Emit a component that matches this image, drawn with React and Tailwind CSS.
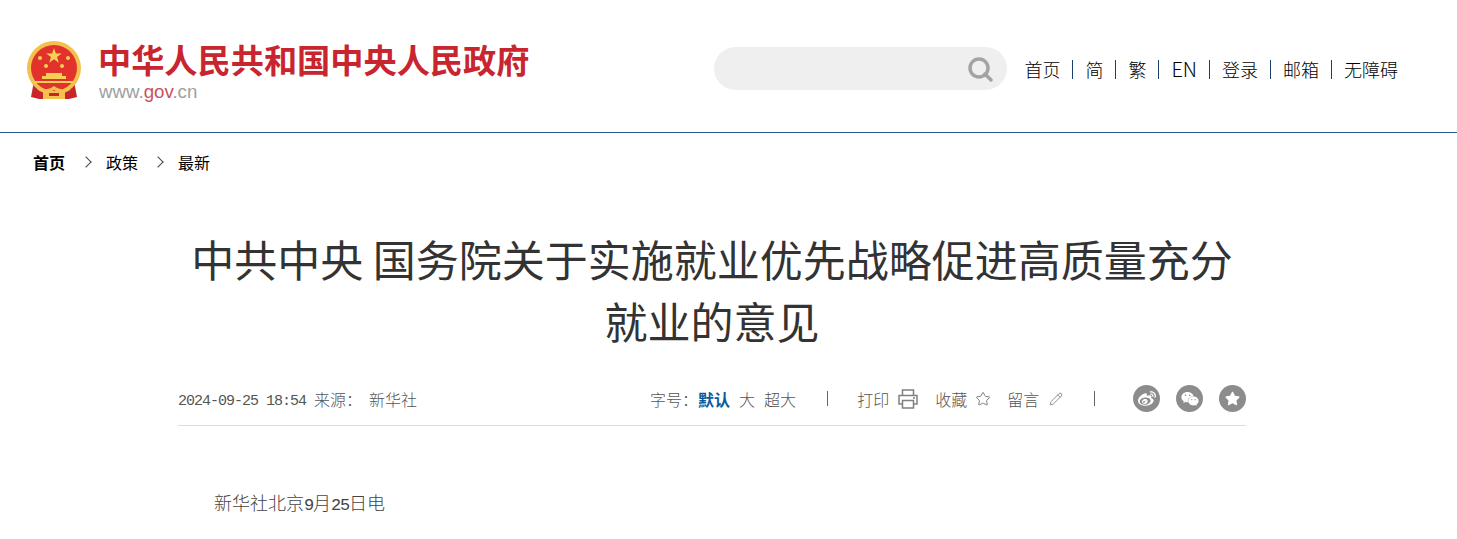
import { Pencil, Star } from "lucide-react";
import { FaWeibo, FaWeixin, FaStar } from "react-icons/fa";

const cjk = "font-['Noto_Sans_CJK_SC','Liberation_Sans',sans-serif]";

const navItems = ["首页", "简", "繁", "EN", "登录", "邮箱", "无障碍"];

function Emblem() {
  return (
    <svg width="58" height="60" viewBox="0 0 58 60" className="shrink-0">
      <path d="M9 40 L6 56 L14 58 L44 58 L52 56 L49 40 Z" fill="#c9232b" />
      <circle cx="29" cy="27" r="27" fill="#f2c14e" />
      <circle cx="29" cy="27" r="23" fill="#e1332c" />
      <path d="M29 7l1.9 5.6h5.9l-4.8 3.5 1.8 5.6-4.8-3.4-4.8 3.4 1.8-5.6-4.8-3.5h5.9z" fill="#f6cf57" />
      <circle cx="15" cy="17" r="2" fill="#f6cf57" />
      <circle cx="43" cy="17" r="2" fill="#f6cf57" />
      <circle cx="21" cy="25" r="2" fill="#f6cf57" />
      <circle cx="37" cy="25" r="2" fill="#f6cf57" />
      <path d="M17 38h24v-3h-4v-3H21v3h-4z" fill="#f6cf57" />
      <path d="M9 40h40v2H9z" fill="#f6cf57" />
      <path d="M11 44c5 5 11 6 18 1 7 5 13 4 18-1l-2 5c-5 3-11 3-16 0-5 3-11 3-16 0z" fill="#f2c14e" />
      <path d="M18 51h22v7H18z" fill="#f2c14e" />
      <path d="M24 52h10v3H24z" fill="#c9232b" />
    </svg>
  );
}

function SearchIcon() {
  return (
    <svg width="26" height="26" viewBox="0 0 26 26" fill="none" stroke="#a3a3a3">
      <circle cx="12" cy="12" r="9" strokeWidth="3.5" />
      <path d="M18 18l6 6" strokeWidth="3.5" strokeLinecap="round" />
    </svg>
  );
}

function PrintIcon() {
  return (
    <svg width="20" height="20" viewBox="0 0 20 20" fill="none" stroke="#808080" strokeWidth="1.5">
      <path d="M4.5 6V1h11v5" />
      <path d="M4.5 15H1V6.5h18V15h-3.5" />
      <path d="M4.5 11.5h11V19h-11z" />
      <path d="M15 9h2" />
    </svg>
  );
}

function Social({ children }) {
  return (
    <span className="flex h-[27px] w-[27px] items-center justify-center rounded-full bg-[#8c8c8c] text-white">
      {children}
    </span>
  );
}

export default function App() {
  return (
    <div className={`h-[539px] overflow-hidden bg-white ${cjk}`}>
      <header className="flex h-[133px] border-b border-[#2f5d94] pl-[25px] pr-[59px] pt-[41px]">
        <Emblem />
        <div className="ml-[15px]">
          <div className="text-[33.2px] leading-[36px] font-bold whitespace-nowrap text-[#c9252f]">
            中华人民共和国中央人民政府
          </div>
          <div className="mt-[4px] pl-[1px] font-['Liberation_Sans'] text-[18.7px] leading-[22px] text-[#a0a0a0]">
            www.<span className="text-[#c9505a]">gov</span>.cn
          </div>
        </div>
        <div className="ml-auto flex h-[50px] items-start">
          <div className="mt-[6px] flex h-[43px] w-[293px] items-center justify-end rounded-full bg-[#efefef] pr-[14px]">
            <SearchIcon />
          </div>
          <nav className="mt-[15px] ml-[17px] flex items-center text-[18px] leading-[26px] text-black">
            {navItems.map((item, i) => (
              <span key={item} className="flex items-center">
                {i > 0 && <span className="mx-[12px] h-[19px] w-px bg-[#1d3f6b]" />}
                <span className={item === "EN" ? "text-[20px] font-light" : "font-light"}>{item}</span>
              </span>
            ))}
          </nav>
        </div>
      </header>

      <div className="flex items-center pt-[17px] pl-[33px] text-[16px] leading-[24px] text-black">
        <span className="font-bold">首页</span>
        <span className="mx-[17px] h-[8px] w-[8px] rotate-45 border-t border-r border-[#444]" />
        <span className="-ml-[1px]">政策</span>
        <span className="mx-[16px] h-[8px] w-[8px] rotate-45 border-t border-r border-[#444]" />
        <span>最新</span>
      </div>

      <main className="mt-[53px] ml-[178px] w-[1068px]">
        <h1 className="text-center text-[43px] leading-[62px] text-[#333]">
          中共中央 国务院关于实施就业优先战略促进高质量充分就业的意见
        </h1>

        <div className="mt-[23px] flex h-[52px] items-center border-b border-[#dcdcdc] pb-[2px] text-[16px] font-light text-[#555]">
          <span className="pt-[7px] font-['Liberation_Mono'] text-[15px] tracking-[-1px]">2024-09-25 18:54</span>
          <span className="ml-[8px]">来源：</span>
          <span className="ml-[7px]">新华社</span>

          <span className="ml-[233px]">字号：</span>
          <span className="font-bold text-[#0b5a9c]">默认</span>
          <span className="ml-[9px]">大</span>
          <span className="ml-[9px]">超大</span>
          <span className="ml-[31px] h-[15px] w-px bg-[#666]" />

          <span className="ml-[29px]">打印</span>
          <span className="ml-[9px]"><PrintIcon /></span>
          <span className="ml-[17px]">收藏</span>
          <Star size={16} strokeWidth={1.5} color="#808080" className="ml-[8px]" />
          <span className="ml-[16px]">留言</span>
          <Pencil size={14} strokeWidth={1.5} color="#808080" className="ml-[10px]" />
          <span className="ml-[31px] h-[15px] w-px bg-[#666]" />

          <div className="ml-auto flex gap-[16px]">
            <Social><FaWeibo size={18} /></Social>
            <Social><FaWeixin size={18} /></Social>
            <Social><FaStar size={15} /></Social>
          </div>
        </div>

        <p className="mt-[62px] pl-[36px] text-[18px] leading-[28px] font-light text-[#444]">
          新华社北京<span className="font-['Liberation_Mono'] text-[17px] tracking-[-1.2px]">9</span>月<span className="font-['Liberation_Mono'] text-[17px] tracking-[-1.2px]">25</span>日电
        </p>
      </main>
    </div>
  );
}
